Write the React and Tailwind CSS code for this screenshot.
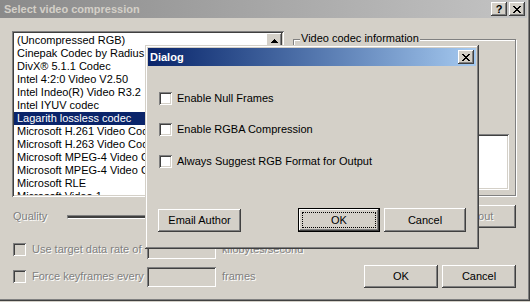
import React from 'react';

const raised =
  'bg-[#d4d0c8] shadow-[inset_-1px_-1px_#404040,inset_1px_1px_#ffffff,inset_-2px_-2px_#808080,inset_2px_2px_#d4d0c8]';
const sunken =
  'shadow-[inset_1px_1px_#808080,inset_-1px_-1px_#ffffff,inset_2px_2px_#404040,inset_-2px_-2px_#d4d0c8]';
const disabledText = 'text-[#808080] [text-shadow:1px_1px_0_#ffffff]';

const codecs = [
  '(Uncompressed RGB)',
  'Cinepak Codec by Radius',
  'DivX® 5.1.1 Codec',
  'Intel 4:2:0 Video V2.50',
  'Intel Indeo(R) Video R3.2',
  'Intel IYUV codec',
  'Lagarith lossless codec',
  'Microsoft H.261 Video Codec',
  'Microsoft H.263 Video Codec',
  'Microsoft MPEG-4 Video Codec V1',
  'Microsoft MPEG-4 Video Codec V2',
  'Microsoft RLE',
  'Microsoft Video 1',
];

function CloseGlyph() {
  return (
    <svg width="8" height="7" viewBox="0 0 8 7" shapeRendering="crispEdges">
      <path d="M0 0h2v1h1v1h2v-1h1v-1h2v1h-1v1h-1v1h-1v1h1v1h1v1h1v1h-2v-1h-1v-1h-2v1h-1v1h-2v-1h1v-1h1v-1h1v-1h-1v-1h-1v-1h-1z" fill="#000" />
    </svg>
  );
}

function TitleButton({ children }) {
  return (
    <div className={`w-[16px] h-[14px] flex items-center justify-center ${raised}`}>{children}</div>
  );
}

function Checkbox({ disabled }) {
  return (
    <div
      className={`w-[13px] h-[13px] shrink-0 ${sunken} ${disabled ? 'bg-[#d4d0c8]' : 'bg-white'}`}
    />
  );
}

function Button({ children, className = '', disabled }) {
  return (
    <div
      className={`h-[23px] flex items-center justify-center ${raised} ${className} ${
        disabled ? disabledText : 'text-black'
      }`}
    >
      {children}
    </div>
  );
}

export default function App() {
  return (
    <div
      className="relative w-[530px] h-[302px] overflow-hidden bg-[#d4d0c8] text-[11px] leading-[13px] text-black"
      style={{ fontFamily: '"Liberation Sans", Arial, sans-serif' }}
    >
      {/* Main window */}
      <div className="h-[301px] flex flex-col shadow-[inset_-1px_-1px_#404040,inset_-2px_-2px_#808080]">
        <div className="h-[18px] mr-[3px] shrink-0 flex items-center justify-between pl-[4px] pr-[2px] bg-linear-to-r from-[#8a8a8a] to-[#c4c4c4]">
          <span className="font-bold text-[#d4d0c8]">Select video compression</span>
          <div className="flex gap-[2px]">
            <TitleButton>
              <span className="font-bold text-[11px] leading-none text-black">?</span>
            </TitleButton>
            <TitleButton>
              <CloseGlyph />
            </TitleButton>
          </div>
        </div>

        <div className="flex flex-col pl-[12px] pr-[14px]">
          {/* Codec list + info group */}
          <div className="mt-[13px] h-[166px] flex">
            <div className={`w-[272px] h-[166px] flex bg-white p-[2px] ${sunken}`}>
              <div className="flex-1 pt-[1px] overflow-hidden">
                {codecs.map((c) => (
                  <div
                    key={c}
                    className={`h-[13px] pl-[3px] whitespace-nowrap ${
                      c === 'Lagarith lossless codec' ? 'bg-[#0a246a] text-white' : ''
                    }`}
                  >
                    {c}
                  </div>
                ))}
              </div>
              <div className="w-[16px] flex flex-col bg-[#e8e6e1]">
                <div className={`w-[16px] h-[16px] flex items-center justify-center ${raised}`}>
                  <svg width="7" height="4" viewBox="0 0 7 4" shapeRendering="crispEdges">
                    <path d="M3 0h1v1h1v1h1v1h1v1h-7v-1h1v-1h1v-1h1z" fill="#000" />
                  </svg>
                </div>
              </div>
            </div>

            <div className="relative ml-[9px] mt-[8px] w-[223px] h-[157px] border border-[#808080] shadow-[1px_1px_0_#ffffff,inset_1px_1px_0_#ffffff] flex flex-col">
              <span className="absolute -top-[8px] left-[6px] px-[1px] bg-[#d4d0c8]">
                Video codec information
              </span>
              <div className={`mt-auto mb-[5px] ml-[6px] mr-[6px] h-[56px] bg-white ${sunken}`} />
            </div>
          </div>

          {/* Quality + about */}
          <div className="mt-[8px] h-[23px] flex items-center">
            <span className={`w-[55px] pl-[1px] ${disabledText}`}>Quality</span>
            <div className="w-[290px] h-[4px] border border-t-[#808080] border-l-[#808080] border-b-white border-r-white bg-[#404040]" />
            <Button className="ml-auto w-[74px]" disabled>About</Button>
          </div>

          {/* Data rate */}
          <div className="mt-[11px] h-[20px] flex items-center">
            <div className="w-[135px] pl-[1px] flex items-center gap-[6px]">
              <Checkbox disabled />
              <span className={disabledText}>Use target data rate of</span>
            </div>
            <div className={`w-[69px] h-[20px] bg-[#d4d0c8] ${sunken}`} />
            <span className={`ml-[6px] ${disabledText}`}>kilobytes/second</span>
          </div>

          {/* Keyframes + OK/Cancel */}
          <div className="mt-[6px] h-[23px] flex items-center">
            <div className="w-[135px] pl-[1px] flex items-center gap-[6px]">
              <Checkbox disabled />
              <span className={disabledText}>Force keyframes every</span>
            </div>
            <div className={`w-[69px] h-[20px] bg-[#d4d0c8] ${sunken}`} />
            <span className={`ml-[6px] ${disabledText}`}>frames</span>
            <div className="ml-auto flex gap-[4px]">
              <Button className="w-[74px]">OK</Button>
              <Button className="w-[74px]">Cancel</Button>
            </div>
          </div>
        </div>
      </div>

      {/* Modal dialog on top */}
      <div className="absolute left-[145px] top-[45px] w-[334px] h-[204px] p-[3px] flex flex-col bg-[#d4d0c8] shadow-[inset_-1px_-1px_#404040,inset_1px_1px_#d4d0c8,inset_-2px_-2px_#808080,inset_2px_2px_#ffffff]">
        <div className="h-[18px] shrink-0 flex items-center justify-between pl-[2px] pr-[2px] bg-linear-to-r from-[#0a246a] to-[#a6caf0]">
          <span className="font-bold text-white">Dialog</span>
          <TitleButton>
            <CloseGlyph />
          </TitleButton>
        </div>
        <div className="flex flex-col pl-[11px] pt-[26px]">
          <div className="flex items-center gap-[5px]">
            <Checkbox />
            <span>Enable Null Frames</span>
          </div>
          <div className="mt-[18px] flex items-center gap-[5px]">
            <Checkbox />
            <span>Enable RGBA Compression</span>
          </div>
          <div className="mt-[19px] flex items-center gap-[5px]">
            <Checkbox />
            <span>Always Suggest RGB Format for Output</span>
          </div>
        </div>
        <div className="mt-[40px] flex items-center pl-[10px] pr-[10px]">
          <Button className="w-[83px]">Email Author</Button>
          <div className="ml-auto w-[82px] h-[24px] border border-black">
            <div className={`relative w-full h-full flex items-center justify-center ${raised}`}>
              <div className="absolute inset-[3px] border border-dotted border-black" />
              OK
            </div>
          </div>
          <Button className="ml-[4px] w-[82px] h-[24px]">Cancel</Button>
        </div>
      </div>
    </div>
  );
}
